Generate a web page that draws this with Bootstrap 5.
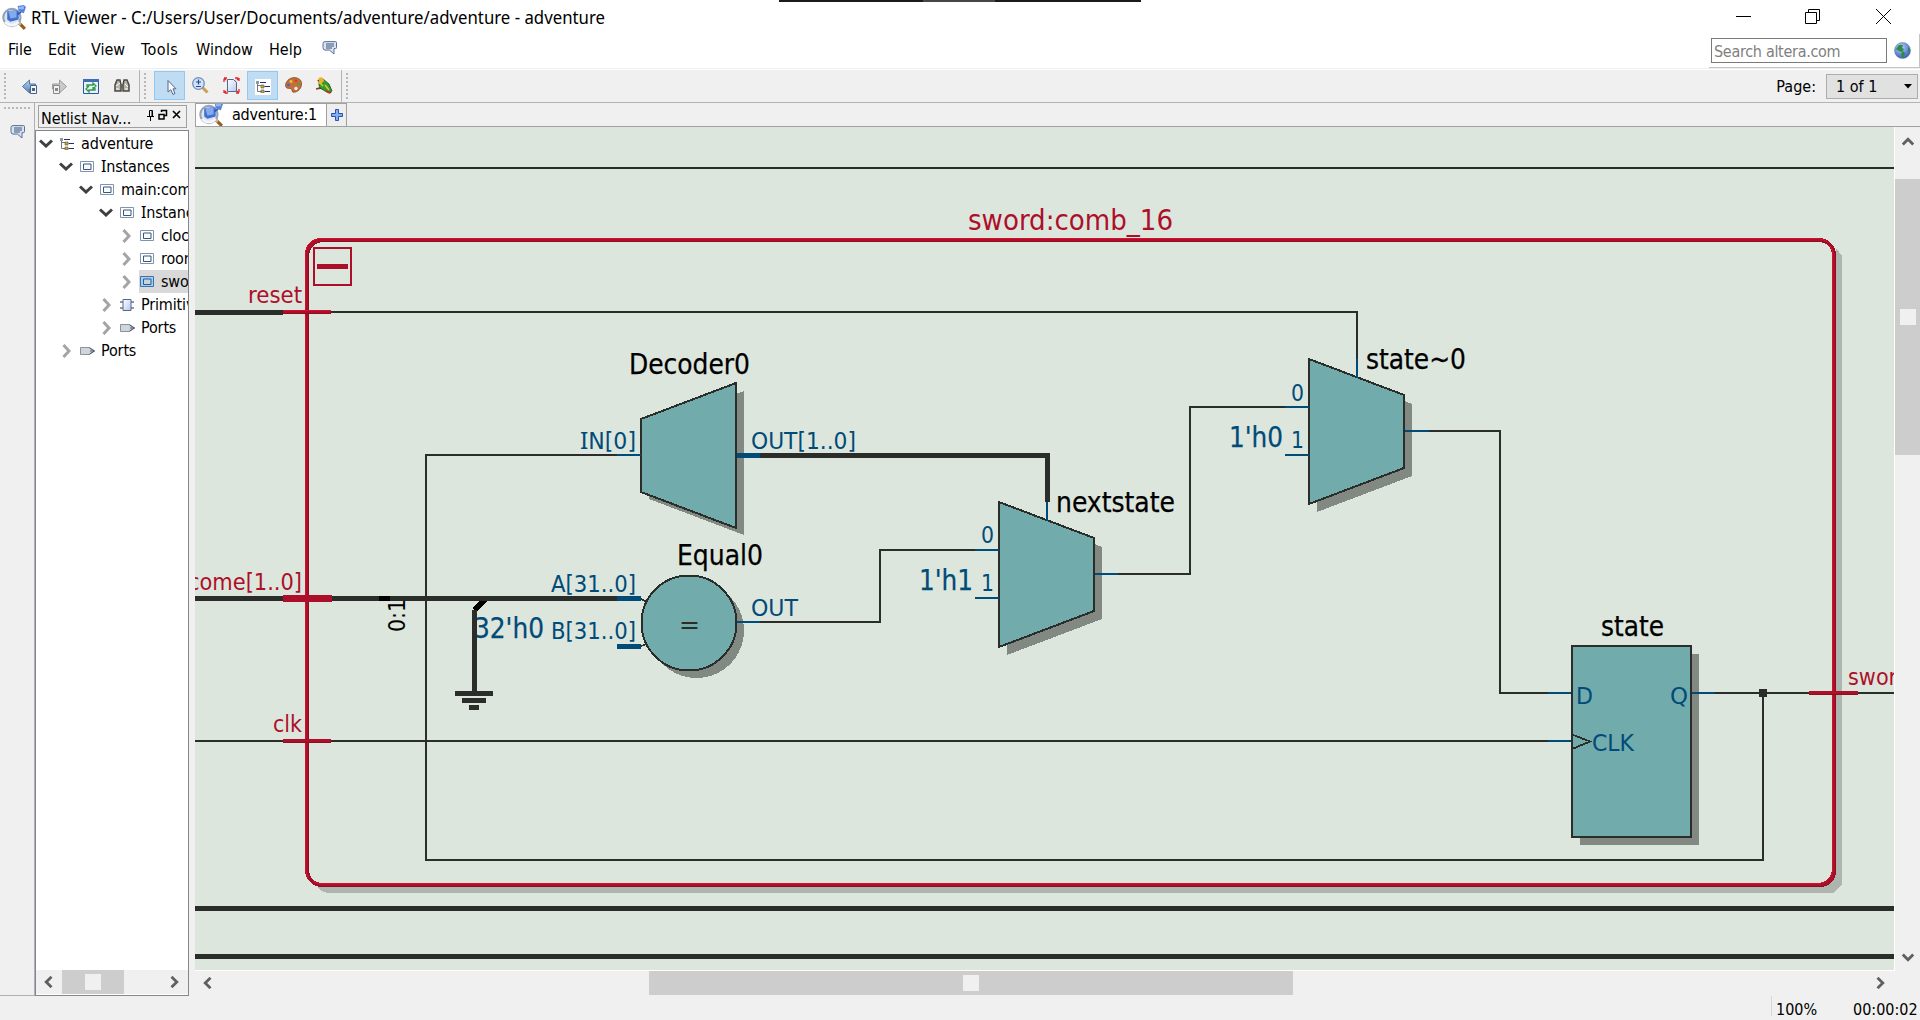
<!DOCTYPE html>
<html lang="en">
<head>
<meta charset="utf-8">
<title>RTL Viewer</title>
<link href="https://cdn.jsdelivr.net/npm/bootstrap@5.3.0/dist/css/bootstrap.min.css" rel="stylesheet">
<style>
  :root { --ui: "DejaVu Sans Condensed", "DejaVu Sans", sans-serif; }
  body { width: 1920px; height: 1020px; overflow: hidden; background: #f0f0f0; color: #000; font-family: var(--ui); font-stretch: condensed; font-size: 16px; line-height: 1.2; }
  svg { display: block; flex: none; }
  .cap-i { font-family: "Noto Sans", sans-serif; }
  .app-head { height: 68px; background: #fff; }
  .head-left { width: 900px; }
  .title-row { height: 35px; padding-left: 2px; }
  .title-text { font-family: "Noto Sans", sans-serif; font-size: 17.500px; margin-left: 4px; overflow: visible; }
  .menu-row { height: 29px; padding-left: 8px; }
  .menu-row li { white-space: nowrap; }
  .menu-row .wide { letter-spacing: .4px; }
  .top-pill { left: 779px; top: 0; width: 362px; height: 2px; background: linear-gradient(90deg, #1d1a1c 0 144px, #484547 144px 216px, #1d1a1c 216px); }
  .head-right { width: 211px; }
  .win-buttons { height: 34px; }
  .search-frame { height: 34px; border-right: 1px solid #c4c4c4; border-bottom: 1px solid #c4c4c4; padding: 4px 8px 0 2px; }
  .search-box { width: 176px; height: 25px; border: 1px solid #7a7a7a; color: #808080; padding: 2px 0 0 2px; background: #fff; letter-spacing: -.3px; }
  .head-rule { height: 2px; background: #fff; border-top: 1px solid #eee; }
  .tool-row { height: 33px; border-bottom: 1px solid #b4b4b4; }
  .grip { width: 2px; height: 26px; margin-left: 4px; background: repeating-linear-gradient(#b8b8b8 0 2px, transparent 2px 4px); }
  .group-a { width: 140px; border-right: 1px solid #b4b4b4; height: 32px; }
  .group-b { width: 202px; border-right: 1px solid #b4b4b4; height: 32px; }
  .tool-btn { width: 31px; height: 29px; border: 1px solid transparent; margin-top: -2px; }
  .tool-btn.on { background: #c0dcf3; border-color: #90c8f6; }
  .page-select { width: 92px; height: 25px; margin-right: 2px; margin-left: 10px; background: #e1e1e1; border: 1px solid #adadad; padding: 1px 5px 0 9px; }
  .strip { width: 35px; height: 893px; border-right: 1px solid #b0b0b0; border-bottom: 1px solid #b0b0b0; }
  .strip-grip { width: 27px; height: 2px; margin: 4px 0 16px 4px; background: repeating-linear-gradient(90deg, #b8b8b8 0 2px, transparent 2px 4px); }
  .dock { width: 154px; height: 893px; }
  .dock-title { margin: 2px 2px 2px 3px; height: 23px; border: 1px solid #a0a0a0; padding: 3px 5px 0 2px; }
  .dock-title span { letter-spacing: -.1px; white-space: nowrap; }
  .tree { height: 866px; background: #fff; border: 1px solid #828790; overflow: hidden; }
  .tree ul { margin: 0; padding-top: 1px; }
  .tree li { height: 23px; white-space: nowrap; overflow: hidden; letter-spacing: -.15px; }
  .twisty { width: 20px; margin-right: 3px; flex: none; }
  .lvl1 { padding-left: 20px; } .lvl2 { padding-left: 40px; } .lvl3 { padding-left: 60px; } .lvl4 { padding-left: 80px; }
  .entry { flex: 1 0 auto; height: 23px; padding-left: 1px; gap: 7px; }
  .entry.on { background: #d9d9d9; }
  .tree-scroll { height: 25px; background: #f0f0f0; border-bottom: 1px solid #fff; }
  .thumb { background: #cdcdcd; }
  .knob { width: 16px; height: 16px; background: #f0f0f0; }
  .work { margin-left: 6px; width: 1725px; }
  .tabs-row { height: 24px; border-bottom: 1px solid #a0a0a0; }
  .doc-tab { width: 131px; background: #fff; border-left: 1px solid #a0a0a0; border-top: 1px solid #a0a0a0; overflow: hidden; }
  .doc-tab span { margin-left: 8px; letter-spacing: -.25px; }
  .add-tab { width: 21px; background: #eee; border: 1px solid #a0a0a0; border-bottom: 0; }
  .canvas-pane { width: 1700px; height: 844px; border-right: 1px solid #fff; border-bottom: 1px solid #fff; }
  .v-scroll { width: 25px; height: 844px; }
  .h-scroll { height: 25px; width: 1700px; padding-bottom: 1px; }
  .status { height: 24px; }
  .status .zoom { width: 82px; border-left: 1px solid #d7d7d7; padding-left: 4px; height: 20px; line-height: 27px; }
  .status .clock { width: 67px; line-height: 27px; height: 20px; }
  .sch { shape-rendering: crispEdges; }
  .sch .shade { fill: #828882; }
  .sch .part { fill: #72abac; stroke: #2b2d2b; stroke-width: 2; }
  .sch .net { fill: none; stroke: #2b2d2b; stroke-width: 2; }
  .sch .bus { fill: none; stroke: #2b2d2b; stroke-width: 5; }
  .sch .pin { fill: none; stroke: #004b78; stroke-width: 2; }
  .sch .buspin { stroke-width: 5; }
  .sch text { font-size: 23.500px; fill: #004b78; }
  .sch .name { font-size: 27.500px; fill: #000; stroke: #000; stroke-width: .25px; }
  .sch .val { font-size: 27.500px; stroke: #004b78; stroke-width: .25px; }
  .sch .red { fill: #ad0f2a; }
</style>
</head>
<body class="d-flex flex-column">
<svg width="0" height="0" class="position-absolute">
  <defs>
    <linearGradient id="gArrow" x1="0" y1="0" x2="0" y2="1"><stop offset="0" stop-color="#b4d4f4"/><stop offset="1" stop-color="#4d82c4"/></linearGradient>
    <linearGradient id="gPale" x1="0" y1="0" x2="1" y2="1"><stop offset="0" stop-color="#fff"/><stop offset="1" stop-color="#b4c8f4"/></linearGradient>
    <radialGradient id="gGlobe" cx=".4" cy=".3" r=".7"><stop offset="0" stop-color="#b9d4fa"/><stop offset="1" stop-color="#3a5fc4"/></radialGradient>
    <symbol id="app" viewBox="0 0 24 25">
      <path d="M15 16l7 7" stroke="#9a5a1c" stroke-width="3"/><path d="M15 16l3 3" stroke="#c8b898" stroke-width="2.5"/>
      <circle cx="9.5" cy="12" r="8.3" fill="#dde4ee" stroke="#93a3b8" stroke-width="2"/>
      <path d="M3 16a8 8 0 0 0 13 0" fill="none" stroke="#f4f6fa" stroke-width="2.5"/>
      <path d="M5 6l9-1 2 1v8l-8 2-3-2z" fill="#3f6fd0"/><path d="M6 6l8-1v7l-6 1z" fill="#83a9ee"/>
      <path d="M15 9l3-2 1-3" stroke="#2d4da0" fill="none" stroke-width="1.3"/>
      <path d="M15 1l6-1 2 2-2 6-5-2z" fill="#5580dc"/><path d="M16 2l5-1v3h-5z" fill="#96b8f6"/>
    </symbol>
    <symbol id="talk" viewBox="0 0 15 14">
      <path d="M3 .6h10.500q1 0 1 1v5q0 1-1 1h-1.500V13L7.500 9.100H3q-2 0-2-2.500v-4q0-2 2-2z" fill="#d6e2f6" stroke="#5a7096"/>
      <path d="M4 3h8M4 5h8M4 7h6" stroke="#42546f"/>
    </symbol>
    <symbol id="box" viewBox="0 0 14 12"><path d="M.5.500h13v10H.5z" fill="#fff" stroke="#7f94ae"/><path d="M3.500 3h7.500v5.500H3.500z" fill="#f8fafc" stroke="#3a5578"/></symbol>
    <symbol id="boxon" viewBox="0 0 14 12"><path d="M.5.500h13v10H.5z" fill="#a9cdec" stroke="#3476b4"/><path d="M3.500 3h7.500v5.500H3.500z" fill="#c6d4e0" stroke="#2a5a90"/></symbol>
    <symbol id="hier" viewBox="0 0 14 12"><path d="M1.500 0v10.500H6M1.500 4.500H6" fill="none" stroke="#777"/><path d="M0 0h3v3H0z" fill="#8d99a8"/><path d="M4 1.500h6M8.500 5.500H14M8.500 10.500H14" stroke="#222a7a"/><path d="M5 4h3v3H5zM5 9h3v3H5z" fill="#caa63a" stroke="#554" stroke-width=".6"/></symbol>
    <symbol id="prim" viewBox="0 0 14 12"><path d="M0 3h14M0 9h14" stroke="#333"/><path d="M3 .500h8v11H3z" fill="url(#gPale)" stroke="#56688c"/></symbol>
    <symbol id="port" viewBox="0 0 15 8"><path d="M.5.500h9L14.500 4 9.500 7.500h-9z" fill="#d2d5d8" stroke="#8593a2"/><path d="M9.500 1l5 3-5 3M10 4h3" fill="none" stroke="#4b5a6c"/></symbol>
    <symbol id="open" viewBox="0 0 14 9"><path d="M1 1.500l6 5.500 6-5.500" fill="none" stroke="#404040" stroke-width="3"/></symbol>
    <symbol id="shut" viewBox="0 0 9 14"><path d="M1.500 1l5.500 6-5.500 6" fill="none" stroke="#a4a4a4" stroke-width="3"/></symbol>
    <symbol id="larr" viewBox="0 0 9 12"><path d="M7.500.8L2.200 6l5.300 5.200" fill="none" stroke="#606060" stroke-width="2.800"/></symbol>
    <symbol id="rarr" viewBox="0 0 9 12"><path d="M1.500.8L6.800 6l-5.300 5.200" fill="none" stroke="#606060" stroke-width="2.800"/></symbol>
    <symbol id="uarr" viewBox="0 0 12 9"><path d="M.8 7.500L6 2.200l5.200 5.300" fill="none" stroke="#606060" stroke-width="2.800"/></symbol>
    <symbol id="darr" viewBox="0 0 12 9"><path d="M.8 1.500L6 6.800l5.200-5.300" fill="none" stroke="#606060" stroke-width="2.800"/></symbol>
  </defs>
</svg>

<div class="top-pill position-absolute"></div>
<header class="app-head d-flex justify-content-between">
  <div class="head-left">
    <div class="title-row d-flex align-items-center">
      <svg width="25" height="26"><use href="#app"/></svg>
      <svg class="title-text" width="590" height="30"><text x="0" y="21" textLength="574" lengthAdjust="spacingAndGlyphs">RTL Viewer - C:/Users/User/Documents/adventure/adventure - adventure</text></svg>
    </div>
    <ul class="menu-row list-unstyled d-flex align-items-center m-0">
      <li style="width:40px">File</li><li style="width:43px">Edit</li><li style="width:50px">View</li><li class="wide" style="width:55px">Tools</li><li style="width:73px">Window</li><li style="width:53px">Help</li>
      <li><svg width="15" height="14" class="mb-1"><use href="#talk"/></svg></li>
    </ul>
  </div>
  <div class="head-right">
    <div class="win-buttons">
      <svg width="211" height="34" viewBox="1709 0 211 34" fill="none" stroke="#000"><path d="M1736 16.500h15M1805.500 12.500h11v11h-11zM1808.500 12v-2.500h11v11h-2.500M1876 9l15 15M1891 9l-15 15"/></svg>
    </div>
    <div class="search-frame d-flex justify-content-between">
      <div class="search-box d-flex align-items-center">Search altera.com</div>
      <svg width="17" height="17" viewBox="0 0 17 17" class="mt-1"><circle cx="8.500" cy="8.500" r="8" fill="url(#gGlobe)" stroke="#6d7fa8" stroke-width=".6"/><path d="M2 7l3-4 4 0-1 3 2 1-2 3-3-1zM9 9l2 2-1 4-2 1-1-4zM14 5l2 3-1 3-1-1z" fill="#2f8c3c"/></svg>
    </div>
  </div>
</header>
<div class="head-rule"></div>

<div class="tool-row d-flex align-items-center">
  <div class="group-a d-flex align-items-center">
    <div class="grip"></div>
    <svg width="132" height="32" viewBox="6 70 132 32">
      <path d="M22.500 86.500l7-6.500v4h6v5h-6v4z" fill="url(#gArrow)" stroke="#5c7594"/><path d="M30.500 85.500h6v8h-6z" fill="#f3f5f8" stroke="#4a6284"/><path d="M32 88h3v3h-3z" fill="#4a6284"/>
      <path d="M66.500 86.500l-7-6.500v4h-7v5h7v4z" fill="#cacaca" stroke="#9c9c9c"/><path d="M53.500 85.500h6v8h-6z" fill="#f1f1f1" stroke="#888"/><path d="M55 88h3v3h-3z" fill="#888"/>
      <path d="M83.500 79.500h15v14h-15z" fill="#e8f2fa" stroke="#2d56a0"/><path d="M83 79h16v3H83z" fill="#3f6cb8"/><path d="M87 87v-2h6v-2l3 3-3 3v-2M95 88v2h-6v2l-3-3 3-3" fill="none" stroke="#2f9a44" stroke-width="1.300"/>
      <path d="M117 80h3l1 5v6h-6v-6zM124 80h3l2 5v6h-6v-6z" fill="#b4b4ac" stroke="#4a4a42" stroke-width="1.500"/><path d="M120 84h4v4h-4z" fill="#66665e"/><path d="M116 86l4-3M125 84l3 3M116 89h3M125 89h3" stroke="#fff"/>
    </svg>
  </div>
  <div class="group-b d-flex align-items-center">
    <div class="grip"></div>
    <div class="d-flex ms-2">
      <div class="tool-btn on d-flex align-items-center justify-content-center"><svg width="12" height="17" class="mt-1 ms-1"><path d="M2 1.500l8 8.300H7l2 4.700-2 1-2.200-4.800L2 13z" fill="#f7f9fc" stroke="#54698a"/></svg></div>
      <div class="tool-btn d-flex align-items-center justify-content-center"><svg width="17" height="17"><path d="M10 10l5.500 5.500" stroke="#d49a50" stroke-width="3"/><circle cx="6.500" cy="6.500" r="5.800" fill="#d4e2f8" stroke="#7090be" stroke-width="1.300"/><path d="M6.500 2.500v5M4 5h5M4 9.500h5" stroke="#264b96" stroke-width="1.200"/></svg></div>
      <div class="tool-btn d-flex align-items-center justify-content-center"><svg width="17" height="17"><path d="M4.500 2.500h6l3 3v9h-9z" fill="url(#gPale)" stroke="#53688c"/><path d="M1 5V1h4M12 1h4v4M16 12v4h-4M5 16H1v-4M1 1l3 3M16 1l-3 3M16 16l-3-3M1 16l3-3" fill="none" stroke="#e0242c" stroke-width="1.300" stroke-dasharray="3 1"/></svg></div>
      <div class="tool-btn on d-flex align-items-center justify-content-center"><svg width="16" height="16" class="mt-1"><path d="M0 0h16v16H0z" fill="#fff"/><svg x="1" y="2" width="14" height="12"><use href="#hier"/></svg></svg></div>
      <div class="tool-btn d-flex align-items-center justify-content-center"><svg width="17" height="16"><path d="M9 .7c5 0 7.500 2.500 7.500 6 0 5-4 8.500-8 8.500-2 0-1-3-2.500-3.500S.600 12 .600 8.500 4 .7 9 .7z" fill="#c5703a" stroke="#8a5430"/><circle cx="6" cy="4.500" r="1.400" fill="#e9c52c"/><circle cx="11" cy="3.800" r="1.400" fill="#e63428"/><circle cx="13.500" cy="7" r="1.400" fill="#4aa048"/><circle cx="11" cy="11.500" r="1.700" fill="#f5ead8"/><circle cx="3.500" cy="8" r="1.400" fill="#3d65ca"/></svg></div>
      <div class="tool-btn d-flex align-items-center justify-content-center"><svg width="17" height="17"><path d="M0 12q8-3 15 4" stroke="#74441e" stroke-width="1.600" fill="none"/><path d="M3 4l4-2 6 5 3 7-3 2-4-2-5-3-1-3z" fill="#3c9a2c" stroke="#24481a" stroke-width=".8"/><path d="M2 2q2-3 5-1l1 3-3 3-2 0z" fill="#e8b42c"/><path d="M1 3h2v2z" fill="#74441e"/><path d="M4 6l3 3M9 8l4 5" stroke="#c8d834" stroke-width="1.400"/><path d="M10 14l4 2" stroke="#d22a20" stroke-width="1.600"/></svg></div>
    </div>
  </div>
  <div class="grip"></div>
  <div class="ms-auto" style="padding-top:1px">Page:</div>
  <div class="page-select d-flex align-items-center justify-content-between"><span>1 of 1</span><svg width="8" height="5"><path d="M0 0h8L4 4.500z"/></svg></div>
</div>

<div class="d-flex">
  <aside class="strip">
    <div class="strip-grip"></div>
    <svg width="15" height="14" style="margin-left:10px"><use href="#talk"/></svg>
  </aside>
  <aside class="dock">
    <div class="dock-title d-flex justify-content-between">
      <span>Netlist Nav...</span>
      <svg width="36" height="13" fill="none" stroke="#000"><path d="M4.500 7V1.500h3V7M7 2v5M2 7.500h7M5.500 8v4"/><path d="M16.500 3v-1.500h5v5h-2M14 5.500h5v4.500h-5z" stroke-width="1.500"/><path d="M28 2l7 7M35 2l-7 7" stroke-width="1.600"/></svg>
    </div>
    <div class="tree d-flex flex-column">
      <ul class="list-unstyled flex-grow-1">
        <li class="d-flex align-items-center lvl0"><span class="twisty d-flex justify-content-center"><svg width="14" height="9"><use href="#open"/></svg></span><span class="entry d-flex align-items-center"><svg width="14" height="12"><use href="#hier"/></svg>adventure</span></li>
        <li class="d-flex align-items-center lvl1"><span class="twisty d-flex justify-content-center"><svg width="14" height="9"><use href="#open"/></svg></span><span class="entry d-flex align-items-center"><svg width="14" height="12"><use href="#box"/></svg><span><span class="cap-i">I</span>nstances</span></span></li>
        <li class="d-flex align-items-center lvl2"><span class="twisty d-flex justify-content-center"><svg width="14" height="9"><use href="#open"/></svg></span><span class="entry d-flex align-items-center"><svg width="14" height="12"><use href="#box"/></svg>main:com</span></li>
        <li class="d-flex align-items-center lvl3"><span class="twisty d-flex justify-content-center"><svg width="14" height="9"><use href="#open"/></svg></span><span class="entry d-flex align-items-center"><svg width="14" height="12"><use href="#box"/></svg><span><span class="cap-i">I</span>nstanc</span></span></li>
        <li class="d-flex align-items-center lvl4"><span class="twisty d-flex justify-content-center"><svg width="9" height="14"><use href="#shut"/></svg></span><span class="entry d-flex align-items-center"><svg width="14" height="12"><use href="#box"/></svg>cloc</span></li>
        <li class="d-flex align-items-center lvl4"><span class="twisty d-flex justify-content-center"><svg width="9" height="14"><use href="#shut"/></svg></span><span class="entry d-flex align-items-center"><svg width="14" height="12"><use href="#box"/></svg>room</span></li>
        <li class="d-flex align-items-center lvl4"><span class="twisty d-flex justify-content-center"><svg width="9" height="14"><use href="#shut"/></svg></span><span class="entry on d-flex align-items-center"><svg width="14" height="12"><use href="#boxon"/></svg>swo</span></li>
        <li class="d-flex align-items-center lvl3"><span class="twisty d-flex justify-content-center"><svg width="9" height="14"><use href="#shut"/></svg></span><span class="entry d-flex align-items-center"><svg width="14" height="12"><use href="#prim"/></svg>Primitiv</span></li>
        <li class="d-flex align-items-center lvl3"><span class="twisty d-flex justify-content-center"><svg width="9" height="14"><use href="#shut"/></svg></span><span class="entry d-flex align-items-center"><svg width="15" height="8" style="margin-right:-1px"><use href="#port"/></svg>Ports</span></li>
        <li class="d-flex align-items-center lvl1"><span class="twisty d-flex justify-content-center"><svg width="9" height="14"><use href="#shut"/></svg></span><span class="entry d-flex align-items-center"><svg width="15" height="8" style="margin-right:-1px"><use href="#port"/></svg>Ports</span></li>
      </ul>
      <div class="tree-scroll d-flex align-items-center">
        <svg width="9" height="12" class="ms-2"><use href="#larr"/></svg>
        <div class="thumb h-100 d-flex align-items-center justify-content-center" style="width:62px;margin-left:9px"><div class="knob"></div></div>
        <svg width="9" height="12" class="ms-auto" style="margin-right:9px"><use href="#rarr"/></svg>
      </div>
    </div>
  </aside>

  <main class="work">
    <div class="tabs-row d-flex">
      <div class="doc-tab d-flex align-items-center"><svg width="25" height="26" style="margin-left:3px"><use href="#app"/></svg><span>adventure:1</span></div>
      <div class="add-tab d-flex align-items-center justify-content-center"><svg width="12" height="12"><path d="M4.500.500h3v4h4v3h-4v4h-3v-4h-4v-3h4z" fill="#7fb0f0" stroke="#2c50ae"/></svg></div>
    </div>
    <div class="d-flex">
      <div class="canvas-pane">
        <svg class="sch" width="1699" height="843" viewBox="195 127 1699 843">
          <path d="M195 127h1699v843H195z" fill="#dde6dd"/>
          <path class="net" d="M195 168h1699"/>
          <path class="bus" d="M195 908.500h1699M195 956.500h1699"/>

          <!-- module frame and its drop shadow -->
          <path d="M1836 248l6 8v628l-9 9H330q-10 0-14-9h1504q14-1 16-14z" fill="#aeb4ae"/>
          <rect x="307" y="240" width="1527" height="645" rx="15" fill="#dde6dd" stroke="#ad0f2a" stroke-width="4"/>
          <rect x="305.500" y="238.500" width="1527" height="645" rx="15" fill="none" stroke="#d3112f"/>
          <rect x="308.500" y="241.500" width="1527" height="645" rx="15" fill="none" stroke="#8d0e22"/>
          <rect x="314" y="248" width="37" height="37" fill="none" stroke="#ad0f2a" stroke-width="2"/>
          <path d="M317 264h31v5h-31z" fill="#ad0f2a"/>
          <text class="red" style="font-size:27.500px" x="968" y="230" textLength="205" lengthAdjust="spacingAndGlyphs">sword:comb_16</text>

          <!-- nets -->
          <path class="bus" d="M195 312.500h88M195 598.500h422M760 455.500h287.500V502"/>
          <path class="net" d="M331 312h1026v47M195 741h1353M617 455H426v405h1337V693M760 622h120v-72h95M1118 574h72V407h95M1429 431h71v262h48M1715 693h179"/>
          <path d="M1759 689h8v8h-8z" fill="#2b2d2b"/>
          <path d="M379 596h11v5h-11z"/>
          <path d="M486 598.500L474.500 610" stroke="#000" stroke-width="5"/>
          <path class="bus" d="M455 693.500h38M462 700.500h24M469 707.500h10M440 598.500h177"/>

          <!-- frame ports -->
          <path d="M283 310h48v4h-48zM283 739h48v4h-48zM1809 691h49v4h-49zM283 595h49v7h-49z" fill="#ad0f2a"/>
          <path d="M283 310.500h48" stroke="#d3112f"/><path d="M283 742.500h48M1809 694.500h49M283 313.500h48" stroke="#8d0e22"/>
          <text class="red" x="248" y="303" textLength="54" lengthAdjust="spacingAndGlyphs">reset</text>
          <text class="red" x="188" y="590" textLength="114" lengthAdjust="spacingAndGlyphs">come[1..0]</text>
          <text class="red" x="273" y="732" textLength="29" lengthAdjust="spacingAndGlyphs">clk</text>
          <text class="red" x="1848" y="685" textLength="62" lengthAdjust="spacingAndGlyphs">sword</text>
          <text transform="translate(405 632) rotate(-90)" style="fill:#000" textLength="33" lengthAdjust="spacingAndGlyphs">0:1</text>

          <!-- decoder -->
          <path class="shade" d="M649 427L744 391V535L649 499z"/>
          <path class="part" d="M641 419L736 383V528L641 492z"/>
          <path class="pin" d="M617 455h24"/><path class="pin buspin" d="M737 455.500h23"/>
          <text class="name" x="629" y="374" textLength="121" lengthAdjust="spacingAndGlyphs">Decoder0</text>
          <text x="580" y="449" textLength="56" lengthAdjust="spacingAndGlyphs"><tspan class="cap-i">I</tspan>N[0]</text>
          <text x="751" y="449" textLength="105" lengthAdjust="spacingAndGlyphs">OUT[1..0]</text>

          <!-- comparator -->
          <circle class="shade" cx="696.500" cy="630.500" r="47.500"/>
          <circle class="part" cx="689" cy="623" r="47.500"/>
          <path class="net" style="stroke-width:1.500" d="M641 599l6 3M641 646l6-2"/>
          <path class="pin buspin" d="M617 598.500h24M617 646.500h24"/><path class="pin" d="M737 622h23"/>
          <text x="679" y="633" style="fill:#2b2d2b" textLength="21" lengthAdjust="spacingAndGlyphs">=</text>
          <text class="name" x="677" y="565" textLength="86" lengthAdjust="spacingAndGlyphs">Equal0</text>
          <text x="551" y="592" textLength="85" lengthAdjust="spacingAndGlyphs">A[31..0]</text>
          <text x="551" y="639" textLength="85" lengthAdjust="spacingAndGlyphs">B[31..0]</text>
          <text class="val" x="474" y="638" textLength="70" lengthAdjust="spacingAndGlyphs">32'h0</text>
          <path class="bus" d="M474.500 610v82"/>
          <text x="751" y="616" textLength="47" lengthAdjust="spacingAndGlyphs">OUT</text>

          <!-- nextstate mux -->
          <path class="shade" d="M1007 510L1102 547V619L1007 655z"/>
          <path class="part" d="M999 502L1094 538V611L999 647z"/>
          <path class="pin" d="M975 550h24M975 598h24M1095 574h23M1047 502v19"/>
          <text x="981" y="543" textLength="13" lengthAdjust="spacingAndGlyphs">0</text>
          <text x="981" y="591" textLength="13" lengthAdjust="spacingAndGlyphs">1</text>
          <text class="val" x="919" y="590" textLength="54" lengthAdjust="spacingAndGlyphs">1'h1</text>
          <text class="name" x="1056" y="512" textLength="119" lengthAdjust="spacingAndGlyphs">nextstate</text>

          <!-- state~0 mux -->
          <path class="shade" d="M1317 367L1412 404V476L1317 512z"/>
          <path class="part" d="M1309 359L1404 395V468L1309 504z"/>
          <path class="pin" d="M1285 407h24M1285 455h24M1405 431h24M1357 359v19"/>
          <text x="1291" y="401" textLength="13" lengthAdjust="spacingAndGlyphs">0</text>
          <text x="1291" y="448" textLength="13" lengthAdjust="spacingAndGlyphs">1</text>
          <text class="val" x="1229" y="447" textLength="54" lengthAdjust="spacingAndGlyphs">1'h0</text>
          <text class="name" x="1366" y="369" textLength="100" lengthAdjust="spacingAndGlyphs">state~0</text>

          <!-- state register -->
          <path class="shade" d="M1580 654h119v191h-119z"/>
          <path class="part" d="M1572 646h119v191h-119z"/>
          <path class="net" style="stroke-width:1.800" d="M1572 734.500l18 7-18 7.500"/>
          <path class="pin" d="M1548 693h23M1548 741h23M1692 693h23"/>
          <text class="name" x="1601" y="636" textLength="63" lengthAdjust="spacingAndGlyphs">state</text>
          <text x="1576" y="704" textLength="17" lengthAdjust="spacingAndGlyphs">D</text>
          <text x="1670" y="704" textLength="18" lengthAdjust="spacingAndGlyphs">Q</text>
          <text x="1592" y="751" textLength="42" lengthAdjust="spacingAndGlyphs">CLK</text>
        </svg>
      </div>
      <div class="v-scroll d-flex flex-column align-items-center">
        <svg width="12" height="9" style="margin-top:10px"><use href="#uarr"/></svg>
        <div class="thumb w-100 d-flex align-items-center justify-content-center" style="height:276px;margin-top:33px"><div class="knob"></div></div>
        <svg width="12" height="9" class="mt-auto" style="margin-bottom:9px"><use href="#darr"/></svg>
      </div>
    </div>
    <div class="h-scroll d-flex align-items-center">
      <svg width="9" height="12" class="ms-2"><use href="#larr"/></svg>
      <div class="thumb h-100 d-flex align-items-center justify-content-center" style="width:644px;margin-left:437px"><div class="knob"></div></div>
      <svg width="9" height="12" class="ms-auto" style="margin-right:10px"><use href="#rarr"/></svg>
    </div>
  </main>
</div>

<footer class="status d-flex justify-content-end mt-auto">
  <div class="zoom">100%</div>
  <div class="clock">00:00:02</div>
</footer>
<script src="https://cdn.jsdelivr.net/npm/bootstrap@5.3.0/dist/js/bootstrap.bundle.min.js"></script>
</body>
</html>
